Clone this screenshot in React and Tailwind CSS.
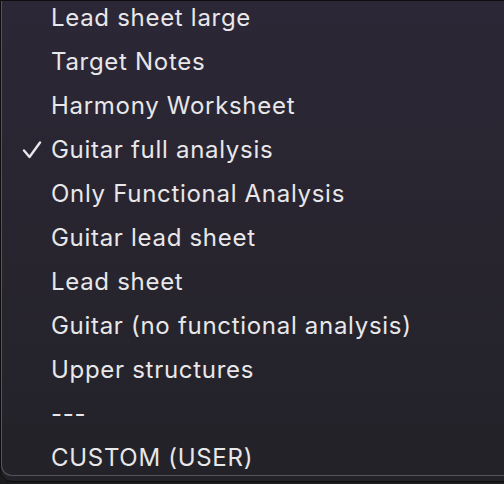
import React from "react";

const items = [
  "Lead sheet large",
  "Target Notes",
  "Harmony Worksheet",
  "Guitar full analysis",
  "Only Functional Analysis",
  "Guitar lead sheet",
  "Lead sheet",
  "Guitar (no functional analysis)",
  "Upper structures",
  "---",
  "CUSTOM (USER)",
];

export default function App() {
  return (
    <div className="w-[504px] h-[484px] overflow-hidden bg-[#1c1c1f]">
      <div className="w-[520px] h-[482px] rounded-bl-[12px] border border-[#0e0e10] bg-gradient-to-b from-[#2c2736] to-[#232228] overflow-hidden">
        <div className="h-full border-l border-b border-[#55545a] rounded-bl-[11px]">
          <ul className="-mt-[5px] flex flex-col text-[#e8e7ea] font-['Inter',sans-serif] text-[24px] tracking-[0.7px]">
            {items.map((t) => (
              <li key={t} className="h-[44px] flex items-center">
                <span className="w-[49px] flex justify-center pl-[10px]">
                  {t === "Guitar full analysis" ? (
                    <svg width="20" height="18" viewBox="0 0 20 18" fill="none">
                      <path d="M2 9.5 L7.5 16 L18 1.5" stroke="#e8e7ea" strokeWidth="2.4" strokeLinecap="round" strokeLinejoin="round" />
                    </svg>
                  ) : null}
                </span>
                <span>{t}</span>
              </li>
            ))}
          </ul>
        </div>
      </div>
    </div>
  );
}
